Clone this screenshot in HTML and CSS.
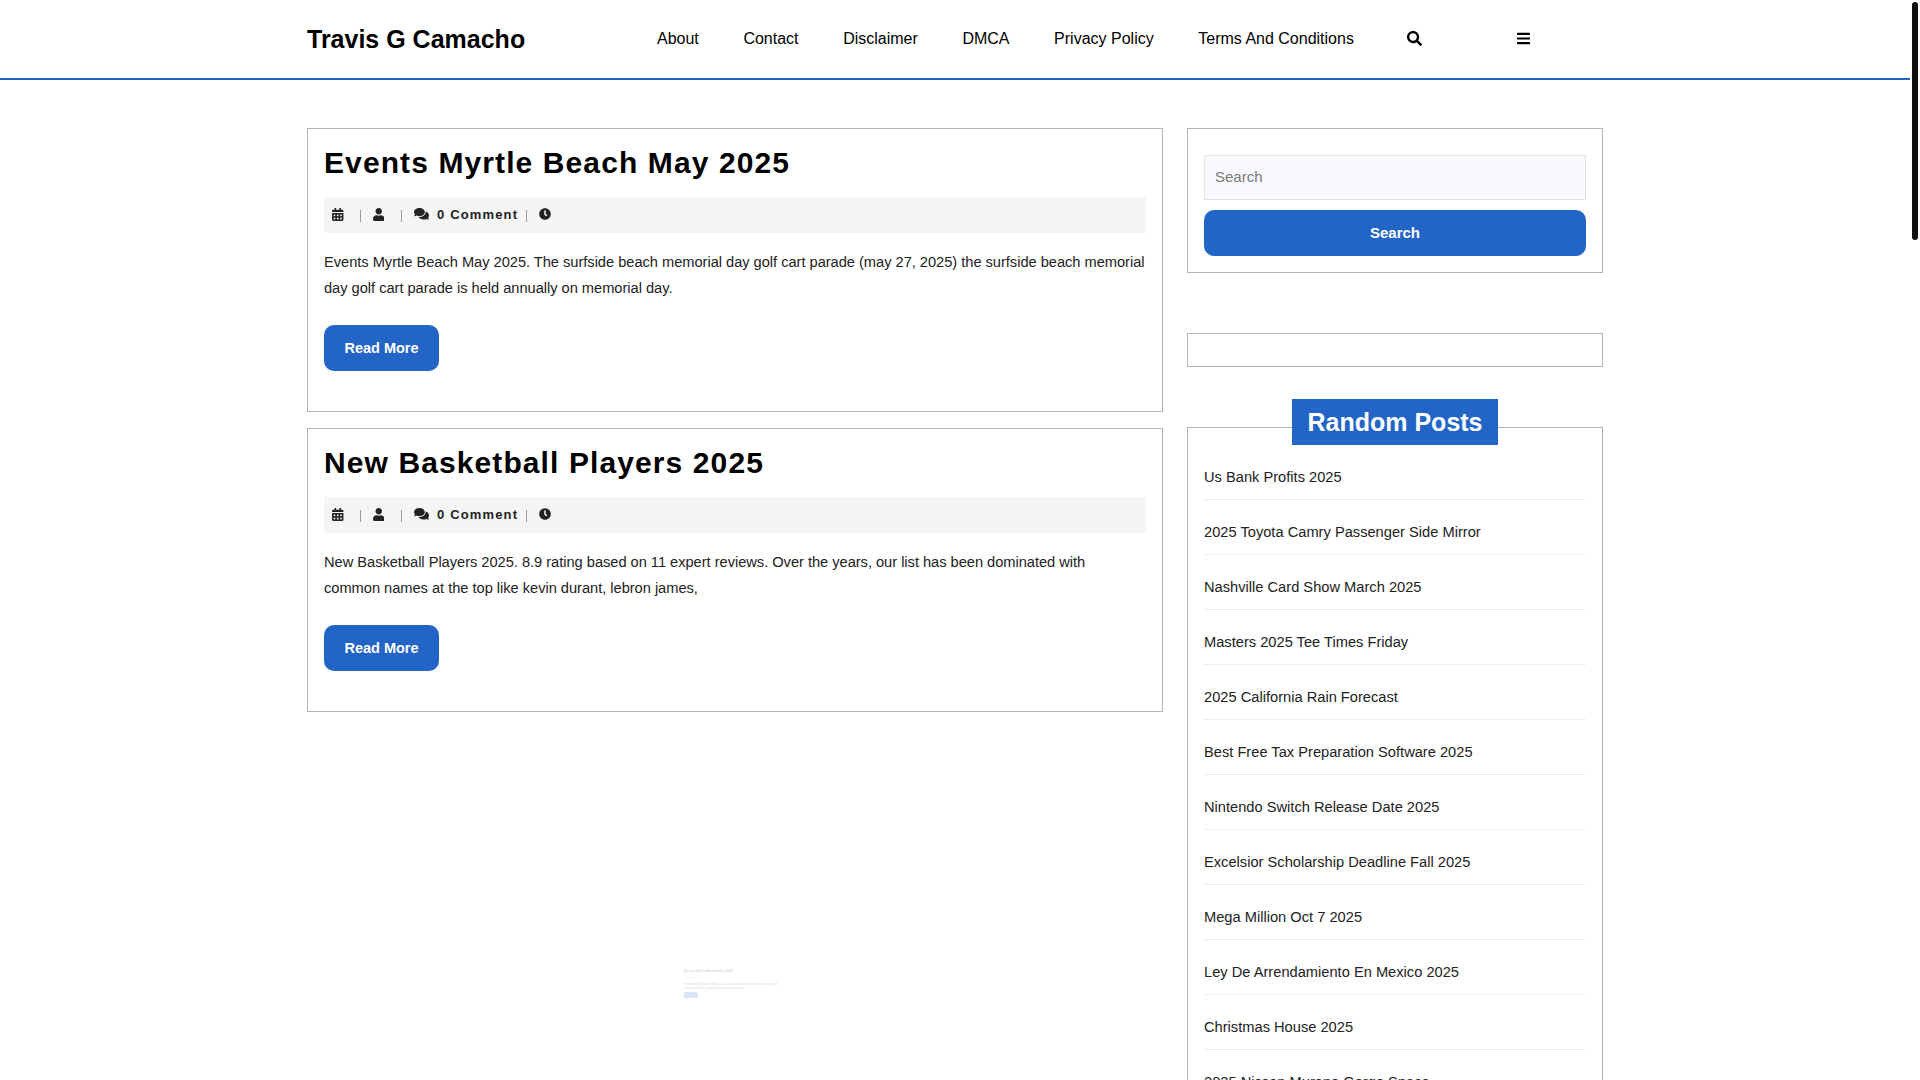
FILE: index.html
```html
<!DOCTYPE html>
<html lang="en">
<head>
    <meta charset="UTF-8">
    <meta name="viewport" content="width=device-width, initial-scale=1.0">
    <title>Travis G Camacho</title>
    <link rel="stylesheet" href="styles.css">
</head>
<body>
    <div class="page">
        <header class="site-header">
            <div class="container header-row">
                <a class="site-title" href="#">Travis G Camacho</a>
                <nav class="main-nav">
                    <a href="#">About</a>
                    <a href="#">Contact</a>
                    <a href="#">Disclaimer</a>
                    <a href="#">DMCA</a>
                    <a href="#">Privacy Policy</a>
                    <a href="#">Terms And Conditions</a>
                </nav>
                <svg class="icon search-icon" viewBox="0 0 512 512"><path d="M505 442.7L405.3 343c-4.5-4.5-10.6-7-17-7H372c27.6-35.3 44-79.7 44-128C416 93.1 322.9 0 208 0S0 93.1 0 208s93.1 208 208 208c48.3 0 92.7-16.4 128-44v16.3c0 6.4 2.5 12.5 7 17l99.7 99.7c9.4 9.4 24.6 9.4 33.9 0l28.3-28.3c9.4-9.4 9.4-24.6.1-34zM208 336c-70.7 0-128-57.2-128-128 0-70.7 57.2-128 128-128 70.7 0 128 57.2 128 128 0 70.7-57.2 128-128 128z"/></svg>
                <svg class="icon bars-icon" viewBox="0 0 448 512"><path d="M16 132h416c8.837 0 16-7.163 16-16V76c0-8.837-7.163-16-16-16H16C7.163 60 0 67.163 0 76v40c0 8.837 7.163 16 16 16zm0 160h416c8.837 0 16-7.163 16-16v-40c0-8.837-7.163-16-16-16H16c-8.837 0-16 7.163-16 16v40c0 8.837 7.163 16 16 16zm0 160h416c8.837 0 16-7.163 16-16v-40c0-8.837-7.163-16-16-16H16c-8.837 0-16 7.163-16 16v40c0 8.837 7.163 16 16 16z"/></svg>
            </div>
        </header>

        <div class="container content-row">
            <main class="main-col">
                <article class="post">
                    <h2 class="post-title">Events Myrtle Beach May 2025</h2>
                    <div class="post-meta">
                        <svg class="icon meta-calendar" viewBox="0 0 448 512"><path d="M0 464c0 26.5 21.5 48 48 48h352c26.5 0 48-21.5 48-48V192H0v272zm320-196c0-6.6 5.4-12 12-12h40c6.6 0 12 5.4 12 12v40c0 6.6-5.4 12-12 12h-40c-6.6 0-12-5.4-12-12v-40zm0 128c0-6.6 5.4-12 12-12h40c6.6 0 12 5.4 12 12v40c0 6.6-5.4 12-12 12h-40c-6.6 0-12-5.4-12-12v-40zM192 268c0-6.6 5.4-12 12-12h40c6.6 0 12 5.4 12 12v40c0 6.6-5.4 12-12 12h-40c-6.6 0-12-5.4-12-12v-40zm0 128c0-6.6 5.4-12 12-12h40c6.6 0 12 5.4 12 12v40c0 6.6-5.4 12-12 12h-40c-6.6 0-12-5.4-12-12v-40zM64 268c0-6.6 5.4-12 12-12h40c6.6 0 12 5.4 12 12v40c0 6.6-5.4 12-12 12H76c-6.6 0-12-5.4-12-12v-40zm0 128c0-6.6 5.4-12 12-12h40c6.6 0 12 5.4 12 12v40c0 6.6-5.4 12-12 12H76c-6.6 0-12-5.4-12-12v-40zM400 64h-48V16c0-8.8-7.2-16-16-16h-32c-8.8 0-16 7.2-16 16v48H160V16c0-8.8-7.2-16-16-16h-32c-8.8 0-16 7.2-16 16v48H48C21.5 64 0 85.5 0 112v48h448v-48c0-26.5-21.5-48-48-48z"/></svg>
                        <span class="meta-sep sep-first"></span>
                        <svg class="icon meta-user" viewBox="0 0 448 512"><path d="M224 256c70.7 0 128-57.3 128-128S294.7 0 224 0 96 57.3 96 128s57.3 128 128 128zm89.6 32h-16.7c-22.2 10.2-46.9 16-72.9 16s-50.6-5.8-72.9-16h-16.7C60.2 288 0 348.2 0 422.4V464c0 26.5 21.5 48 48 48h352c26.5 0 48-21.5 48-48v-41.6c0-74.2-60.2-134.4-134.4-134.4z"/></svg>
                        <span class="meta-sep sep-second"></span>
                        <svg class="icon meta-comments" viewBox="0 0 576 512"><path d="M416 192c0-88.4-93.1-160-208-160S0 103.6 0 192c0 34.3 14.1 65.9 38 92-13.4 30.2-35.5 54.2-35.8 54.5-2.2 2.3-2.8 5.7-1.5 8.7S4.8 352 8 352c36.6 0 66.9-12.3 88.7-25 32.2 15.7 70.3 25 111.3 25 114.9 0 208-71.6 208-160zm122 220c23.9-26 38-57.7 38-92 0-66.9-53.5-124.2-129.3-148.1.9 6.6 1.3 13.3 1.3 20.1 0 105.9-107.7 192-240 192-10.8 0-21.3-.8-31.7-1.9C207.8 439.6 281.8 480 368 480c41 0 79.1-9.2 111.3-25 21.8 12.7 52.1 25 88.7 25 3.2 0 6.1-1.9 7.3-4.8 1.3-2.9.7-6.3-1.5-8.7-.3-.3-22.4-24.2-35.8-54.5z"/></svg>
                        <span class="meta-text">0 Comment</span>
                        <span class="meta-sep sep-third"></span>
                        <svg class="icon meta-clock" viewBox="0 0 512 512"><path d="M256,8C119,8,8,119,8,256S119,504,256,504,504,393,504,256,393,8,256,8Zm92.49,313h0l-20,25a16,16,0,0,1-22.49,2.5h0l-67-49.72a40,40,0,0,1-15-31.23V112a16,16,0,0,1,16-16h32a16,16,0,0,1,16,16V256l58,42.5A16,16,0,0,1,348.49,321Z"/></svg>
                    </div>
                    <p class="post-text">Events Myrtle Beach May 2025. The surfside beach memorial day golf cart parade (may 27, 2025) the surfside beach memorial day golf cart parade is held annually on memorial day.</p>
                    <a class="read-more" href="#">Read More</a>
                </article>

                <article class="post">
                    <h2 class="post-title">New Basketball Players 2025</h2>
                    <div class="post-meta">
                        <svg class="icon meta-calendar" viewBox="0 0 448 512"><path d="M0 464c0 26.5 21.5 48 48 48h352c26.5 0 48-21.5 48-48V192H0v272zm320-196c0-6.6 5.4-12 12-12h40c6.6 0 12 5.4 12 12v40c0 6.6-5.4 12-12 12h-40c-6.6 0-12-5.4-12-12v-40zm0 128c0-6.6 5.4-12 12-12h40c6.6 0 12 5.4 12 12v40c0 6.6-5.4 12-12 12h-40c-6.6 0-12-5.4-12-12v-40zM192 268c0-6.6 5.4-12 12-12h40c6.6 0 12 5.4 12 12v40c0 6.6-5.4 12-12 12h-40c-6.6 0-12-5.4-12-12v-40zm0 128c0-6.6 5.4-12 12-12h40c6.6 0 12 5.4 12 12v40c0 6.6-5.4 12-12 12h-40c-6.6 0-12-5.4-12-12v-40zM64 268c0-6.6 5.4-12 12-12h40c6.6 0 12 5.4 12 12v40c0 6.6-5.4 12-12 12H76c-6.6 0-12-5.4-12-12v-40zm0 128c0-6.6 5.4-12 12-12h40c6.6 0 12 5.4 12 12v40c0 6.6-5.4 12-12 12H76c-6.6 0-12-5.4-12-12v-40zM400 64h-48V16c0-8.8-7.2-16-16-16h-32c-8.8 0-16 7.2-16 16v48H160V16c0-8.8-7.2-16-16-16h-32c-8.8 0-16 7.2-16 16v48H48C21.5 64 0 85.5 0 112v48h448v-48c0-26.5-21.5-48-48-48z"/></svg>
                        <span class="meta-sep sep-first"></span>
                        <svg class="icon meta-user" viewBox="0 0 448 512"><path d="M224 256c70.7 0 128-57.3 128-128S294.7 0 224 0 96 57.3 96 128s57.3 128 128 128zm89.6 32h-16.7c-22.2 10.2-46.9 16-72.9 16s-50.6-5.8-72.9-16h-16.7C60.2 288 0 348.2 0 422.4V464c0 26.5 21.5 48 48 48h352c26.5 0 48-21.5 48-48v-41.6c0-74.2-60.2-134.4-134.4-134.4z"/></svg>
                        <span class="meta-sep sep-second"></span>
                        <svg class="icon meta-comments" viewBox="0 0 576 512"><path d="M416 192c0-88.4-93.1-160-208-160S0 103.6 0 192c0 34.3 14.1 65.9 38 92-13.4 30.2-35.5 54.2-35.8 54.5-2.2 2.3-2.8 5.7-1.5 8.7S4.8 352 8 352c36.6 0 66.9-12.3 88.7-25 32.2 15.7 70.3 25 111.3 25 114.9 0 208-71.6 208-160zm122 220c23.9-26 38-57.7 38-92 0-66.9-53.5-124.2-129.3-148.1.9 6.6 1.3 13.3 1.3 20.1 0 105.9-107.7 192-240 192-10.8 0-21.3-.8-31.7-1.9C207.8 439.6 281.8 480 368 480c41 0 79.1-9.2 111.3-25 21.8 12.7 52.1 25 88.7 25 3.2 0 6.1-1.9 7.3-4.8 1.3-2.9.7-6.3-1.5-8.7-.3-.3-22.4-24.2-35.8-54.5z"/></svg>
                        <span class="meta-text">0 Comment</span>
                        <span class="meta-sep sep-third"></span>
                        <svg class="icon meta-clock" viewBox="0 0 512 512"><path d="M256,8C119,8,8,119,8,256S119,504,256,504,504,393,504,256,393,8,256,8Zm92.49,313h0l-20,25a16,16,0,0,1-22.49,2.5h0l-67-49.72a40,40,0,0,1-15-31.23V112a16,16,0,0,1,16-16h32a16,16,0,0,1,16,16V256l58,42.5A16,16,0,0,1,348.49,321Z"/></svg>
                    </div>
                    <p class="post-text">New Basketball Players 2025. 8.9 rating based on 11 expert reviews. Over the years, our list has been dominated with<br>common names at the top like kevin durant, lebron james,</p>
                    <a class="read-more" href="#">Read More</a>
                </article>

                <div class="faded-post">
                    <div class="faded-title">Events Myrtle Beach May 2025</div>
                    <div class="faded-meta">0 Comment</div>
                    <div class="faded-text">Events Myrtle Beach May 2025. The surfside beach memorial day golf cart parade the surfside beach memorial day</div>
                    <div class="faded-button"></div>
                </div>
            </main>

            <aside class="side-col">
                <section class="widget search-widget">
                    <input class="search-input" type="text" placeholder="Search">
                    <button class="search-button" type="button">Search</button>
                </section>

                <section class="widget empty-widget"></section>

                <section class="widget posts-widget">
                    <h3 class="widget-title">Random Posts</h3>
                    <ul class="post-list">
                        <li>Us Bank Profits 2025</li>
                        <li>2025 Toyota Camry Passenger Side Mirror</li>
                        <li>Nashville Card Show March 2025</li>
                        <li>Masters 2025 Tee Times Friday</li>
                        <li>2025 California Rain Forecast</li>
                        <li>Best Free Tax Preparation Software 2025</li>
                        <li>Nintendo Switch Release Date 2025</li>
                        <li>Excelsior Scholarship Deadline Fall 2025</li>
                        <li>Mega Million Oct 7 2025</li>
                        <li>Ley De Arrendamiento En Mexico 2025</li>
                        <li>Christmas House 2025</li>
                        <li>2025 Nissan Murano Gorge Space</li>
                    </ul>
                </section>
            </aside>
        </div>
    </div>
    <div class="scrollbar"><div class="scrollbar-thumb"></div></div>
</body>
</html>
```

FILE: styles.css
```css
* {
    box-sizing: border-box;
}
body {
    font-family: "Liberation Sans", Arial, sans-serif;
    margin: 0;
    color: #000;
    background-color: #fff;
    display: flex;
    height: 100vh;
    overflow: hidden;
}
a {
    color: inherit;
    text-decoration: none;
}
.page {
    width: 1910px;
    height: 1080px;
    overflow: hidden;
}
.scrollbar {
    width: 10px;
    padding: 2px 0 0 2px;
}
.scrollbar-thumb {
    width: 6px;
    height: 238px;
    background-color: #111;
    border-radius: 3px;
}
.container {
    width: 1296px;
    margin: 0 auto;
}
.icon {
    display: block;
    fill: currentColor;
    flex: none;
}

/* header */
.site-header {
    height: 80px;
    border-bottom: 2px solid #2265c6;
}
.header-row {
    display: flex;
    align-items: center;
    height: 78px;
}
.site-title {
    width: 350px;
    font-size: 25px;
    font-weight: 700;
}
.main-nav {
    display: flex;
    gap: 44.6px;
    font-size: 16px;
}
.search-icon {
    width: 15px;
    height: 15px;
    margin: 0 0 1px 53px;
}
.bars-icon {
    width: 13px;
    height: 15px;
    margin: 0 0 1px 95px;
}

/* layout */
.content-row {
    display: flex;
    gap: 24px;
    padding-top: 48px;
}
.main-col {
    width: 856px;
}
.side-col {
    width: 416px;
}

/* posts */
.post {
    border: 1px solid #b3b3b3;
    padding: 16px 16px 39px;
    margin-bottom: 16px;
    height: 284px;
}
.post-title {
    font-size: 30px;
    line-height: 34px;
    letter-spacing: 1.1px;
    margin: 0 0 18px;
    padding-top: 1px;
    height: 34px;
}
.post-meta {
    display: flex;
    align-items: center;
    height: 36px;
    background-color: #f5f5f5;
    color: #222;
    padding: 0 0 2px 8px;
}
.meta-calendar {
    width: 11.5px;
    height: 13px;
}
.meta-user {
    width: 11.5px;
    height: 13px;
}
.meta-comments {
    width: 15px;
    height: 13.5px;
}
.meta-clock {
    width: 12px;
    height: 12px;
}
.meta-sep {
    width: 1px;
    height: 12px;
    background-color: #999;
    margin-top: 3px;
}
.sep-first {
    margin-left: 16px;
    margin-right: 12px;
}
.sep-second {
    margin-left: 17px;
    margin-right: 12px;
}
.sep-third {
    margin-left: 8px;
    margin-right: 12px;
}
.meta-text {
    font-size: 13px;
    font-weight: 700;
    letter-spacing: 1.15px;
    margin-left: 8px;
}
.post-text {
    font-size: 14.67px;
    line-height: 26px;
    letter-spacing: -0.03px;
    color: #222;
    margin: 16px 0 24px;
}
.read-more {
    display: inline-block;
    width: 115px;
    height: 46px;
    line-height: 46px;
    text-align: center;
    font-size: 14.5px;
    font-weight: 700;
    color: #fff;
    background-color: #2265c6;
    border-radius: 10px;
}

/* the half loaded post further down the page */
.faded-post {
    margin-top: 257px;
    margin-left: 377px;
    width: 97px;
    opacity: 0.16;
}
.faded-title {
    font-size: 3.4px;
    line-height: 4px;
    font-weight: 700;
}
.faded-meta {
    font-size: 2.5px;
    line-height: 3px;
    margin-top: 3px;
}
.faded-text {
    font-size: 3px;
    line-height: 4px;
    margin-top: 3px;
}
.faded-button {
    width: 14px;
    height: 6px;
    background-color: #2265c6;
    border-radius: 1px;
    margin-top: 2px;
}

/* sidebar */
.widget {
    border: 1px solid #b3b3b3;
}
.search-widget {
    padding: 26px 16px 16px;
    height: 145px;
}
.search-input {
    display: block;
    width: 100%;
    height: 45px;
    padding: 0 10px 2px;
    font-family: inherit;
    font-size: 15px;
    background-color: #f8f8fd;
    border: 1px solid #e2e2e6;
    outline: none;
}
.search-input::placeholder {
    color: #777;
}
.search-button {
    display: block;
    width: 100%;
    height: 46px;
    margin-top: 10px;
    padding-bottom: 3px;
    font-family: inherit;
    font-size: 15px;
    font-weight: 700;
    color: #fff;
    background-color: #2265c6;
    border: none;
    border-radius: 10px;
}
.empty-widget {
    height: 34px;
    margin-top: 60px;
}
.posts-widget {
    margin-top: 60px;
    padding: 0 16px;
}
.widget-title {
    display: table;
    margin: -29px auto 0;
    padding: 0 15px;
    height: 46px;
    line-height: 46px;
    font-size: 25px;
    font-weight: 700;
    color: #fff;
    background-color: #2265c6;
}
.post-list {
    list-style-type: none;
    margin: 0;
    padding: 0;
}
.post-list li {
    font-size: 14.67px;
    color: #222;
    height: 55px;
    line-height: 17px;
    padding-top: 24px;
    border-bottom: 1px solid #eee;
}
```
